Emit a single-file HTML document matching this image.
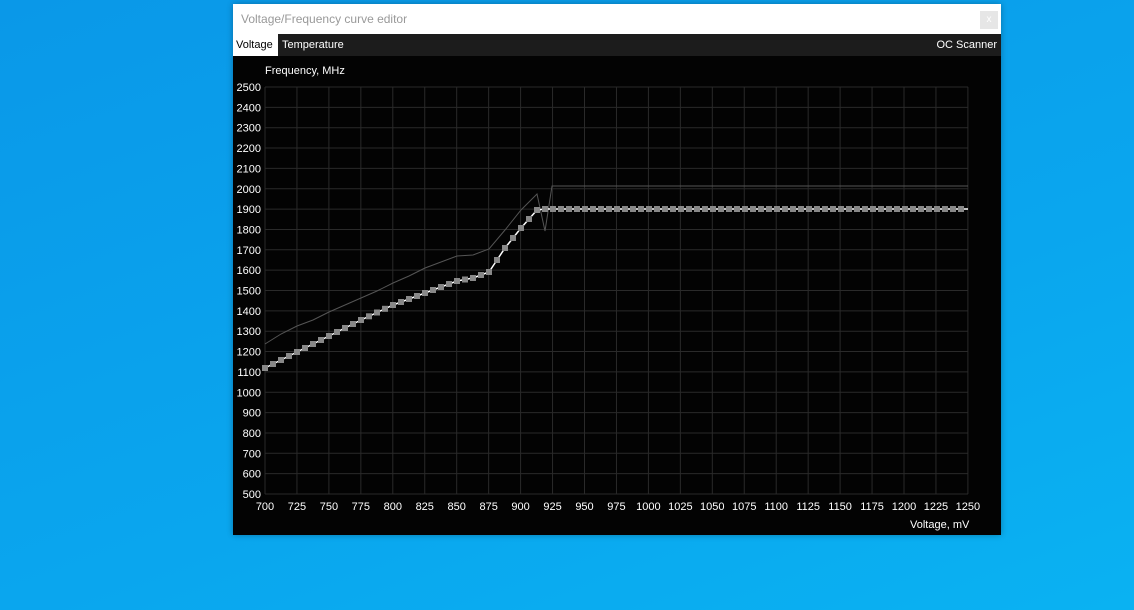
<!DOCTYPE html>
<html><head><style>
body{margin:0;width:1134px;height:610px;overflow:hidden;background:linear-gradient(160deg,#0a98e8 0%,#0aa6ee 60%,#0ab2f2 100%);font-family:"Liberation Sans",sans-serif;position:relative}
#win{position:absolute;left:233px;top:4px;width:768px;height:531px;background:#030303;box-shadow:0 0 6px rgba(0,0,0,.3)}
#title{position:absolute;left:0;top:0;width:768px;height:30px;background:#fff;color:#999;font-size:12px;line-height:30px;text-indent:8px}
#close{position:absolute;right:3px;top:7px;width:18px;height:18px;background:#e6e6e6;color:#fff;font-size:10px;text-align:center;line-height:18px;text-indent:0}
#tabs{position:absolute;left:0;top:30px;width:768px;height:22px;background:#1c1c1c;color:#fff;font-size:11px;line-height:22px}
.t{position:absolute;top:0;padding:0 3px}
svg{position:absolute;left:0;top:0}
</style></head><body>
<div id="win">
<div id="title">Voltage/Frequency curve editor<div id="close">x</div></div>
<div id="tabs"><span class="t" style="left:0;background:#fff;color:#000;width:39px">Voltage</span><span class="t" style="left:46px">Temperature</span><span class="t" style="right:1px">OC Scanner</span></div>
</div>
<svg id="s" width="1134" height="610" font-family="Liberation Sans" font-size="11"></svg>
<script>
var s=document.getElementById('s'),h='';
h+='<text x="265" y="74" fill="#fff">Frequency, MHz</text>';
h+='<text x="910" y="528" fill="#fff">Voltage, mV</text>';
for(var i=0;i<=20;i++){var y=87+i*20.35;h+='<line x1="265" x2="968" y1="'+y+'" y2="'+y+'" stroke="#2a2a2a"/>';h+='<text x="261" y="'+(y+4)+'" fill="#fff" text-anchor="end">'+(2500-i*100)+'</text>';}
for(var i=0;i<=22;i++){var x=265+i*31.95;h+='<line y1="87" y2="494" x1="'+x+'" x2="'+x+'" stroke="#2a2a2a"/>';h+='<text x="'+x+'" y="510" fill="#fff" text-anchor="middle">'+(700+i*25)+'</text>';}
h+='<polyline fill="none" stroke="#555" stroke-width="1" points="265,344 281,334 297,326 313,320 329,312 345,305 361,298 377,291 393,283 409,276 425,268 441,262 457,256 473,255 489,249 505,230 521,210 537,194 545,231 552,186 968,186"/>';
var c=[[265,368],[297,352],[329,336],[361,320],[393,305],[425,293],[457,281],[473,278],[489,272],[505,248],[521,228],[537,210],[545,209],[968,209]];
function f(x){for(var k=0;k<c.length-1;k++){if(x<=c[k+1][0]){var a=c[k],b=c[k+1];return a[1]+(b[1]-a[1])*(x-a[0])/(b[0]-a[0]);}}return 209;}
var pts=[];for(var x=265;x<=963;x+=8){pts.push(x+','+f(x).toFixed(1));}
h+='<polyline fill="none" stroke="#fff" stroke-width="1.5" points="'+pts.join(' ')+' 968,209"/>';
for(var x=265;x<=963;x+=8){var y=f(x);h+='<rect x="'+(x-3)+'" y="'+(y-3).toFixed(1)+'" width="6" height="6" fill="#888"/>';}
s.innerHTML=h;
</script>
</body></html>
